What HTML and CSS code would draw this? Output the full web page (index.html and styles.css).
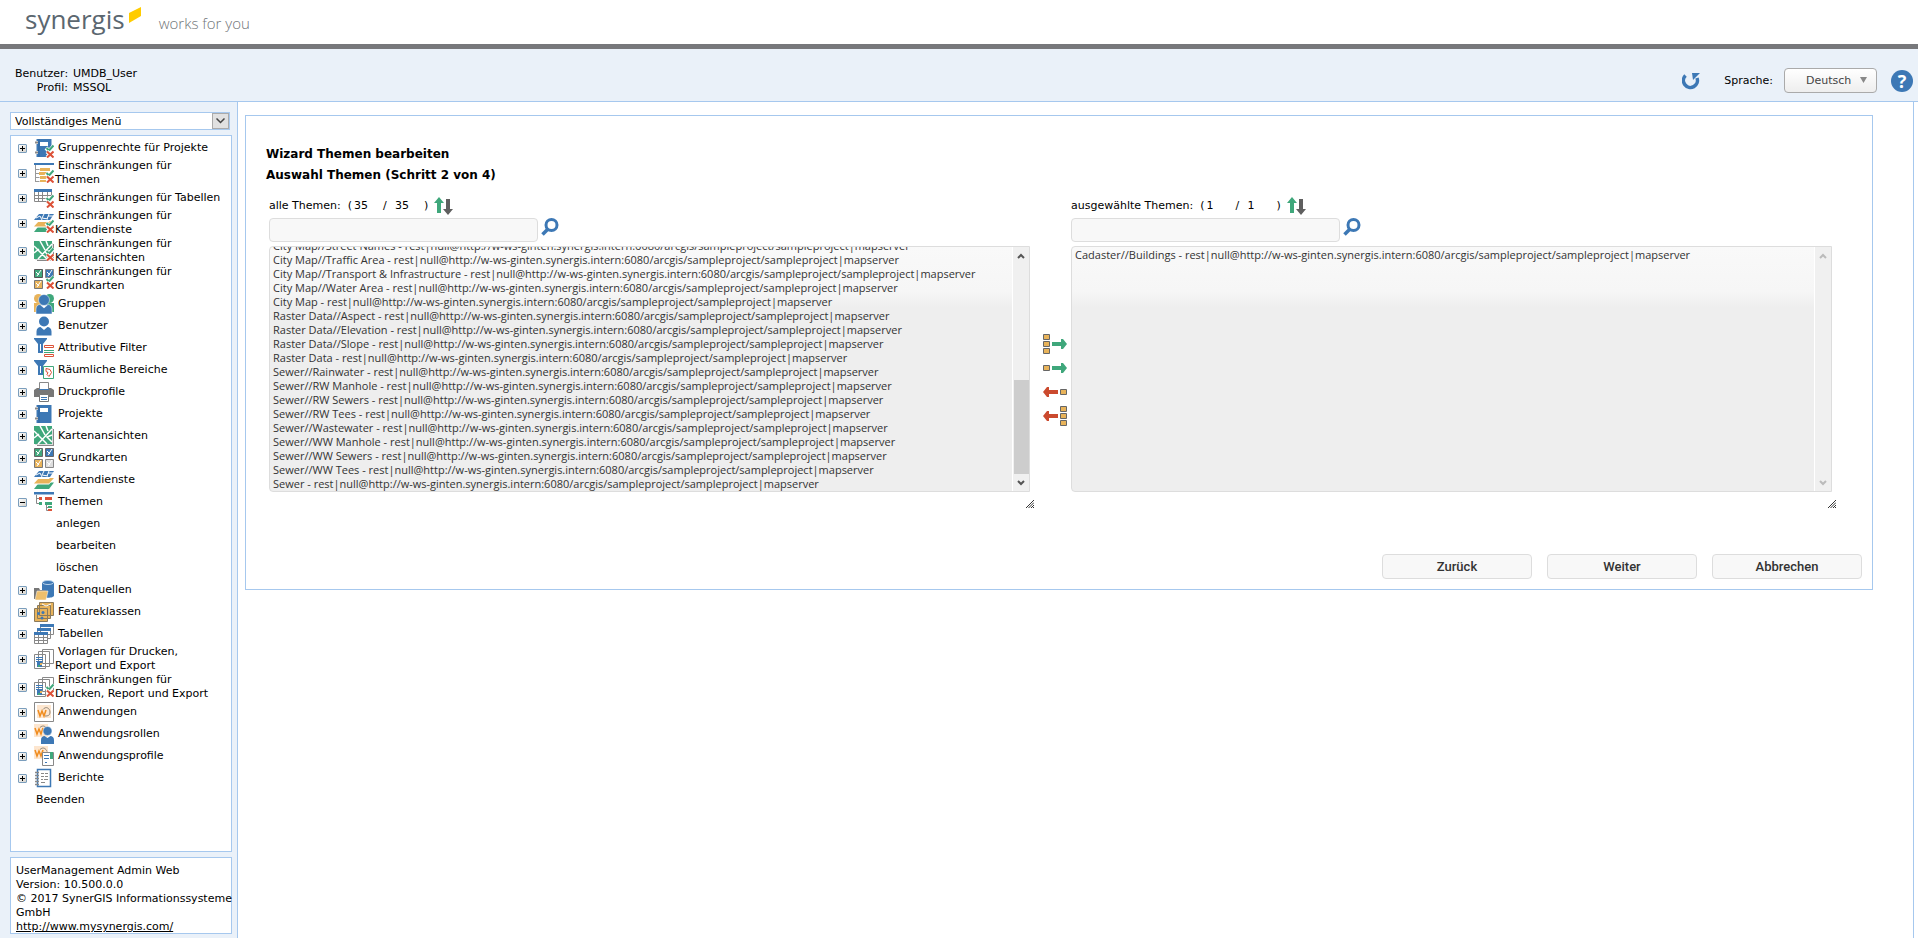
FILE: index.html
```html
<!DOCTYPE html>
<html lang="de">
<head>
<meta charset="utf-8">
<meta name="viewport" content="width=device-width, initial-scale=1">
<title>UserManagement Admin Web</title>
<link rel="stylesheet" href="styles.css">
</head>
<body>

<!-- icon sprite -->
<svg class="sprite" aria-hidden="true">
  <symbol id="ok-no" viewBox="0 0 20 20">
    <path d="M12 10l3 3 5-5.500" fill="none" stroke="#fff" stroke-width="4"/>
    <path d="M12.500 10l2.500 2.500 4.500-5" fill="none" stroke="#3fa77b" stroke-width="2"/>
    <path d="M13 13.500l6.500 6M19.500 13.500l-6.500 6" fill="none" stroke="#fff" stroke-width="4"/>
    <path d="M13 13.500l6.500 6M19.500 13.500l-6.500 6" fill="none" stroke="#dc5238" stroke-width="2"/>
  </symbol>
  <symbol id="project" viewBox="0 0 20 20">
    <path d="M2.500 1h15v18h-15z" fill="#3d78b5"/>
    <path d="M6 4h8v4H6z" fill="#fff"/>
    <path d="M5 1v18" stroke="#2f639b"/>
    <path d="M1 4.500h3M1 14.500h3" stroke="#fff" stroke-width="3"/>
    <path d="M1 4.500h3M1 14.500h3" stroke="#888" stroke-width="2"/>
  </symbol>
  <symbol id="theme-list" viewBox="0 0 20 20">
    <path d="M0 0h20v2H0z" fill="#3d78b5"/>
    <path d="M1.500 2v17M1.500 6.500h4M1.500 10.500h4M1.500 14.500h4M1.500 18.500h4" fill="none" stroke="#999"/>
    <path d="M6 5h10v3H6zM5 9h8v3H5zM6 13h7v3H6zM6 17h6v2H6z" fill="#e8b35a"/>
  </symbol>
  <symbol id="table" viewBox="0 0 20 20">
    <path d="M.500 3.500h17v10H.500zM.500 7.500h17M.500 10.500h17M4.500 4v10M8.500 4v10M13.500 4v10" fill="#fff" stroke="#888"/>
    <path d="M0 1h18v3H0z" fill="#3d78b5"/>
  </symbol>
  <symbol id="layers" viewBox="0 0 20 20">
    <path d="M5 12.500h15l-5 6.500H0z" fill="#3fa77b"/>
    <path d="M5 8.500h15l-5 6H0z" fill="#fff"/>
    <path d="M5 8h15l-5 5.500H0z" fill="#e8b35a"/>
    <path d="M5 3h15l-5 6H0z" fill="#fff"/>
    <path d="M5 1h15l-4 6H0z" fill="#3d78b5"/>
    <path d="M2 5l4-2 2 4M10 1l-2 4 6 1M15 1l-2 5M14 3h5" fill="none" stroke="#fff"/>
  </symbol>
  <symbol id="mapview" viewBox="0 0 20 20">
    <path d="M3 3h17v17H3z" fill="#888"/>
    <path d="M1 2h18v17H1z" fill="#ddd"/>
    <path d="M0 0h18v18H0z" fill="#3fa77b"/>
    <path d="M0 5l13 13M18 3L4 18M6 0l5 9M0 12l5-4M18 9l-5 2 5 5M12 0l2 5" fill="none" stroke="#fff" stroke-width="1.500"/>
  </symbol>
  <symbol id="basemaps" viewBox="0 0 20 20">
    <path d="M.500 .500h8v8h-8z" fill="#3fa77b" stroke="#666"/>
    <path d="M11.500 .500h8v8h-8z" fill="#3d78b5" stroke="#666"/>
    <path d="M.500 11.500h8v8h-8z" fill="#e8b35a" stroke="#777"/>
    <path d="M11.500 11.500h8v8h-8z" fill="#ddd" stroke="#888"/>
    <path d="M2 3l3 3M7 1L3 7M13 3l3 3M18 1l-4 6M2 14l3 3M7 12l-4 6M13 14l3 3M18 12l-4 6" stroke="#fff"/>
  </symbol>
  <symbol id="basemaps3" viewBox="0 0 20 20">
    <path d="M.500 .500h8v8h-8z" fill="#3fa77b" stroke="#555"/>
    <path d="M11.500 .500h8v8h-8z" fill="#3d78b5" stroke="#888"/>
    <path d="M.500 11.500h8v8h-8z" fill="#e8b35a" stroke="#777"/>
    <path d="M2 3l3 3M7 1L3 7M13 3l3 3M18 1l-4 6M2 14l3 3M7 12l-4 6" stroke="#fff"/>
  </symbol>
  <symbol id="user" viewBox="0 0 20 20">
    <circle cx="10" cy="5.500" r="5" fill="#3d78b5"/>
    <path d="M2.500 19.500v-4c0-3 2-4.500 4-4.500l3.500 3 3.500-3c2 0 4 1.500 4 4.500v4z" fill="#3d78b5"/>
  </symbol>
  <symbol id="group" viewBox="0 0 20 20">
    <circle cx="4.500" cy="4.500" r="4.500" fill="#e8b35a"/>
    <path d="M0 9h7v9H0z" fill="#e8b35a"/>
    <circle cx="15.500" cy="4.500" r="4.500" fill="#3fa77b"/>
    <path d="M13 9h7v9h-7z" fill="#3fa77b"/>
    <circle cx="10" cy="6" r="5.500" fill="#3d78b5" stroke="#fff" stroke-width=".5"/>
    <path d="M2 20v-5c0-3 2-4.500 4-4.500l4 3.500 4-3.500c2 0 4 1.500 4 4.500v5z" fill="#3d78b5" stroke="#fff" stroke-width=".5"/>
  </symbol>
  <symbol id="funnel" viewBox="0 0 20 20">
    <path d="M0 0h13v1L9 6v9H4V6L0 1z" fill="#3d78b5"/>
    <path d="M6.500 6v7" stroke="#fff"/>
  </symbol>
  <symbol id="filter-attr" viewBox="0 0 20 20">
    <use href="#funnel"/>
    <path d="M10 7h10v13H10z" fill="#fff"/>
    <path d="M10.500 7.500h9v2h-9zM10.500 16.500h9v2h-9z" fill="#fff" stroke="#dc5238"/>
    <path d="M10 12.500h10M10 14.500h10" stroke="#3fa77b"/>
  </symbol>
  <symbol id="filter-area" viewBox="0 0 20 20">
    <use href="#funnel"/>
    <path d="M9.500 6.500h10v12h-10z" fill="#fff" stroke="#3fa77b"/>
    <path d="M12 8.500l4 1 1.500 3-2.500 4-2-2 1-2-2-1z" fill="none" stroke="#dc5238"/>
  </symbol>
  <symbol id="printer" viewBox="0 0 20 20">
    <path d="M0 8l3-2h14l3 2v7H0z" fill="#777"/>
    <path d="M5.500 .500h9v7h-9z" fill="#fff" stroke="#888"/>
    <path d="M5 7.500h10" stroke="#3d78b5"/>
    <path d="M5.500 12.500h9v7h-9z" fill="#fff" stroke="#777"/>
    <path d="M7 15.500h6M7 17.500h6" stroke="#3d78b5"/>
  </symbol>
  <symbol id="themes" viewBox="0 0 20 20">
    <path d="M0 0h20v2.500H0z" fill="#3d78b5"/>
    <path d="M2.500 3v8.500H6M2.500 6.500H6M12.500 13v5.500H16M12.500 15.500H16" fill="none" stroke="#888"/>
    <path d="M5 5h3v3H5zM11 5h7v3h-7zM14 17h4v2h-4z" fill="#dc5238"/>
    <path d="M5 10h3v3H5zM11 10h7v3h-7zM14 14h4v2h-4z" fill="#3fa77b"/>
  </symbol>
  <symbol id="datasource" viewBox="0 0 20 20">
    <path d="M8 2.500v13c0 3 12 3 12 0v-13z" fill="#3d78b5"/>
    <ellipse cx="14" cy="2.500" rx="5.500" ry="2" fill="#3d78b5" stroke="#b9d2ea"/>
    <path d="M0 19V8h5l1 2h6v9z" fill="#777"/>
    <path d="M3 11h11l-2 9H1z" fill="#eebf6c" stroke="#fff" stroke-width=".5"/>
  </symbol>
  <symbol id="features" viewBox="0 0 20 20">
    <path d="M5.500 .500h14v13h-14zM3.500 3.500h13v13h-13zM.500 6.500h13v13H.500z" fill="#e8b35a" stroke="#8a7a5c"/>
    <path d="M8 2l4 2 5-2" fill="none" stroke="#fff"/>
    <circle cx="4.500" cy="11.500" r="1.500" fill="#3d78b5"/><circle cx="9" cy="10.500" r="1.500" fill="#3d78b5"/><circle cx="8" cy="16" r="1.500" fill="#3d78b5"/>
  </symbol>
  <symbol id="tables" viewBox="0 0 20 20">
    <path d="M6.500 1.500h13v9h-13zM3.500 5.500h13v9h-13z" fill="#fff" stroke="#888"/>
    <path d="M6 0h14v3H6zM3 4h14v3H3z" fill="#3d78b5"/>
    <path d="M.500 9.500h13v10H.500zM.500 13.500h13M.500 16.500h13M4.500 10v10M9.500 10v10" fill="#fff" stroke="#888"/>
    <path d="M0 8h14v3H0z" fill="#3d78b5"/>
  </symbol>
  <symbol id="reports" viewBox="0 0 20 20">
    <path d="M8.500 .500h11v14h-11zM4.500 2.500h11v15h-11zM.500 5.500h11v14H.500z" fill="#fff" stroke="#888"/>
    <path d="M2 8.500h7M2 10.500h7M2 12.500h7" stroke="#3d78b5"/>
    <path d="M3 13h5v5H3z" fill="#3d78b5"/>
    <path d="M4 16h2v2H4z" fill="#3fa77b"/><path d="M6 14h2v2H6z" fill="#e8b35a"/>
  </symbol>
  <symbol id="wo" viewBox="0 0 20 20">
    <path d="M3 3h14v13H3z" fill="#fde6cf"/>
    <path d="M4 8l2 6 2-5 2 5 2-6" fill="none" stroke="#f08c1e" stroke-width="1.500"/>
    <path d="M9 7.500c3-4 7-1 7 2.500s-2 4-5 4" fill="none" stroke="#8f8577"/>
  </symbol>
  <symbol id="app" viewBox="0 0 20 20">
    <path d="M.500 .500h19v19H.500z" fill="#fff" stroke="#888"/>
    <use href="#wo"/>
  </symbol>
  <symbol id="wo-top" viewBox="0 0 20 20">
    <path d="M0 0h14v13H0z" fill="#fde6cf"/>
    <path d="M1 4l2 6 2-5 2 5 2-6" fill="none" stroke="#f08c1e" stroke-width="1.500"/>
    <path d="M6 3.500c3-3 6-1 7 2" fill="none" stroke="#8f8577"/>
  </symbol>
  <symbol id="approle" viewBox="0 0 20 20">
    <use href="#wo-top"/>
    <circle cx="13.500" cy="7" r="4.500" fill="#3d78b5" stroke="#fff" stroke-width=".5"/>
    <path d="M7 20v-4c0-3 2-4 3.500-4l3 2 3-2c1.500 0 3.500 1 3.500 4v4z" fill="#3d78b5"/>
  </symbol>
  <symbol id="appprofile" viewBox="0 0 20 20">
    <use href="#wo-top"/>
    <path d="M8.500 6.500h11v13h-11z" fill="#fff" stroke="#888"/>
    <path d="M16 6h3v7h-3z" fill="#3fa77b"/>
    <path d="M10 9.500h5M10 12.500h5" stroke="#3d78b5"/><path d="M11 16.500h2" stroke="#3d78b5"/>
  </symbol>
  <symbol id="notes" viewBox="0 0 20 20">
    <path d="M3.500 1.500h13v17h-13z" fill="#fff" stroke="#3d78b5" stroke-width="1.500"/>
    <path d="M1 4.500h4M1 7.500h4M1 10.500h4M1 13.500h4M1 16.500h4" stroke="#888" stroke-width="1.500"/>
    <path d="M7 5.500h3M11 5.500h3M7 8.500h3M11 8.500h3M7 11.500h2M10 11.500h4M7 14.500h4" stroke="#888"/>
  </symbol>
  <symbol id="sort" viewBox="0 0 20 18">
    <path d="M5 0l5 6H7v10H3V6H0z" fill="#3fa77b"/>
    <path d="M14 18l-5-6h3V2h4v10h3z" fill="#5f5f5f"/>
  </symbol>
  <symbol id="search" viewBox="0 0 18 18">
    <circle cx="10.500" cy="7" r="5.500" fill="none" stroke="#3d78b5" stroke-width="3"/>
    <path d="M7 11l-5.500 5.500" stroke="#3d78b5" stroke-width="3.500"/>
  </symbol>
  <symbol id="grip" viewBox="0 0 8 8">
    <path d="M0 8l8-8M2.500 8L8 2.500M5 8l3-3M7 8l1-1" stroke="#333"/>
  </symbol>
  <symbol id="chev-up" viewBox="0 0 8 6"><path d="M1 5l3-3 3 3" fill="none" stroke="currentColor" stroke-width="2"/></symbol>
  <symbol id="chev-down" viewBox="0 0 8 6"><path d="M1 1l3 3 3-3" fill="none" stroke="currentColor" stroke-width="2"/></symbol>
  <symbol id="to-right" viewBox="0 0 15 10"><path d="M0 3h9V0h2l4 5-4 5H9V7H0z" fill="#3fa77b"/></symbol>
  <symbol id="to-left" viewBox="0 0 15 10"><path d="M15 3H6V0H4L0 5l4 5h2V7h9z" fill="#cb4a2e"/></symbol>
  <symbol id="box1" viewBox="0 0 7 6"><path d="M.500 .500h6v5h-6z" fill="#e8b35a" stroke="#666"/></symbol>
  <symbol id="box3" viewBox="0 0 7 20">
    <path d="M.500 .500h6v5h-6zM.500 7.500h6v5h-6zM.500 14.500h6v5h-6z" fill="#e8b35a" stroke="#666"/>
  </symbol>
</svg>

<header class="brand">
  <span class="brand-name">synergis</span>
  <svg class="brand-mark" viewBox="0 0 12 16"><path d="M0 6L12 0v9L0 16z" fill="#fc0"/></svg>
  <span class="brand-claim">works for you</span>
</header>

<div class="topbar">
  <dl class="userinfo">
    <dt>Benutzer:</dt><dd>UMDB_User</dd>
    <dt>Profil:</dt><dd>MSSQL</dd>
  </dl>
  <div class="tools">
    <button type="button" class="icon-btn refresh" aria-label="Aktualisieren">
      <svg width="18" height="18" viewBox="0 0 18 18">
        <path d="M3.500 3.500A7 7 0 1 0 15 6" fill="none" stroke="#3d78b5" stroke-width="3.500"/>
        <path d="M10 1h8l-7 7z" fill="#3d78b5"/>
      </svg>
    </button>
    <label for="lang">Sprache:</label>
    <span class="lang-box">
      <select id="lang" class="lang"><option>Deutsch</option></select>
      <svg class="lang-arrow" viewBox="0 0 7 6"><path d="M0 0h7L3.500 6z" fill="#888"/></svg>
    </span>
    <button type="button" class="help" aria-label="Hilfe">?</button>
  </div>
</div>

<div class="page">
  <aside class="sidebar">
    <span class="menu-box">
      <select class="menu-select" aria-label="Menü"><option>Vollständiges Menü</option></select>
      <span class="menu-arrow"><svg width="9" height="6" viewBox="0 0 9 6"><path d="M.500 .500l4 4 4-4" fill="none" stroke="#444" stroke-width="1.500"/></svg></span>
    </span>

    <nav class="tree">
      <ul>
        <li><i class="toggle"></i><svg class="ico"><use href="#project"/><use href="#ok-no"/></svg><a href="#">Gruppenrechte für Projekte</a></li>
        <li class="two"><i class="toggle"></i><svg class="ico"><use href="#theme-list"/><use href="#ok-no"/></svg><a href="#">Einschränkungen für<br>Themen</a></li>
        <li><i class="toggle"></i><svg class="ico"><use href="#table"/><use href="#ok-no"/></svg><a href="#">Einschränkungen für Tabellen</a></li>
        <li class="two"><i class="toggle"></i><svg class="ico"><use href="#layers"/><use href="#ok-no"/></svg><a href="#">Einschränkungen für<br>Kartendienste</a></li>
        <li class="two"><i class="toggle"></i><svg class="ico"><use href="#mapview"/><use href="#ok-no"/></svg><a href="#">Einschränkungen für<br>Kartenansichten</a></li>
        <li class="two"><i class="toggle"></i><svg class="ico"><use href="#basemaps3"/><use href="#ok-no"/></svg><a href="#">Einschränkungen für<br>Grundkarten</a></li>
        <li><i class="toggle"></i><svg class="ico"><use href="#group"/></svg><a href="#">Gruppen</a></li>
        <li><i class="toggle"></i><svg class="ico"><use href="#user"/></svg><a href="#">Benutzer</a></li>
        <li><i class="toggle"></i><svg class="ico"><use href="#filter-attr"/></svg><a href="#">Attributive Filter</a></li>
        <li><i class="toggle"></i><svg class="ico"><use href="#filter-area"/></svg><a href="#">Räumliche Bereiche</a></li>
        <li><i class="toggle"></i><svg class="ico"><use href="#printer"/></svg><a href="#">Druckprofile</a></li>
        <li><i class="toggle"></i><svg class="ico"><use href="#project"/></svg><a href="#">Projekte</a></li>
        <li><i class="toggle"></i><svg class="ico"><use href="#mapview"/></svg><a href="#">Kartenansichten</a></li>
        <li><i class="toggle"></i><svg class="ico"><use href="#basemaps"/></svg><a href="#">Grundkarten</a></li>
        <li><i class="toggle"></i><svg class="ico"><use href="#layers"/></svg><a href="#">Kartendienste</a></li>
        <li><i class="toggle open"></i><svg class="ico"><use href="#themes"/></svg><a href="#">Themen</a></li>
        <li class="sub"><a href="#">anlegen</a></li>
        <li class="sub"><a href="#">bearbeiten</a></li>
        <li class="sub"><a href="#">löschen</a></li>
        <li><i class="toggle"></i><svg class="ico"><use href="#datasource"/></svg><a href="#">Datenquellen</a></li>
        <li><i class="toggle"></i><svg class="ico"><use href="#features"/></svg><a href="#">Featureklassen</a></li>
        <li><i class="toggle"></i><svg class="ico"><use href="#tables"/></svg><a href="#">Tabellen</a></li>
        <li class="two"><i class="toggle"></i><svg class="ico"><use href="#reports"/></svg><a href="#">Vorlagen für Drucken,<br>Report und Export</a></li>
        <li class="two"><i class="toggle"></i><svg class="ico"><use href="#reports"/><use href="#ok-no"/></svg><a href="#">Einschränkungen für<br>Drucken, Report und Export</a></li>
        <li><i class="toggle"></i><svg class="ico"><use href="#app"/></svg><a href="#">Anwendungen</a></li>
        <li><i class="toggle"></i><svg class="ico"><use href="#approle"/></svg><a href="#">Anwendungsrollen</a></li>
        <li><i class="toggle"></i><svg class="ico"><use href="#appprofile"/></svg><a href="#">Anwendungsprofile</a></li>
        <li><i class="toggle"></i><svg class="ico"><use href="#notes"/></svg><a href="#">Berichte</a></li>
        <li class="end"><a href="#">Beenden</a></li>
      </ul>
    </nav>

    <div class="about">
      UserManagement Admin Web<br>
      Version: 10.500.0.0<br>
      © 2017 SynerGIS Informationssysteme<br>
      GmbH<br>
      <a href="http://www.mysynergis.com/">http://www.mysynergis.com/</a>
    </div>
  </aside>

  <main class="content">
    <form class="wizard">
      <h1>Wizard Themen bearbeiten</h1>
      <h2>Auswahl Themen (Schritt 2 von 4)</h2>

      <div class="lists">
        <section class="list">
          <div class="list-head">
            <label for="all">alle Themen:</label>
            <span class="paren">(</span><span class="count">35</span><span class="slash">/</span><span class="count">35</span>)
            <button type="button" class="icon-btn sort" aria-label="Sortieren"><svg width="20" height="18"><use href="#sort"/></svg></button>
          </div>
          <div class="search">
            <input type="text" aria-label="Themen suchen">
            <button type="button" class="icon-btn" aria-label="Suchen"><svg width="18" height="18"><use href="#search"/></svg></button>
          </div>
          <div class="listbox">
            <select id="all" multiple>
              <option>City Map//Street Names - rest|null@http://w-ws-ginten.synergis.intern:6080/arcgis/sampleproject/sampleproject|mapserver</option>
              <option>City Map//Traffic Area - rest|null@http://w-ws-ginten.synergis.intern:6080/arcgis/sampleproject/sampleproject|mapserver</option>
              <option>City Map//Transport &amp; Infrastructure - rest|null@http://w-ws-ginten.synergis.intern:6080/arcgis/sampleproject/sampleproject|mapserver</option>
              <option>City Map//Water Area - rest|null@http://w-ws-ginten.synergis.intern:6080/arcgis/sampleproject/sampleproject|mapserver</option>
              <option>City Map - rest|null@http://w-ws-ginten.synergis.intern:6080/arcgis/sampleproject/sampleproject|mapserver</option>
              <option>Raster Data//Aspect - rest|null@http://w-ws-ginten.synergis.intern:6080/arcgis/sampleproject/sampleproject|mapserver</option>
              <option>Raster Data//Elevation - rest|null@http://w-ws-ginten.synergis.intern:6080/arcgis/sampleproject/sampleproject|mapserver</option>
              <option>Raster Data//Slope - rest|null@http://w-ws-ginten.synergis.intern:6080/arcgis/sampleproject/sampleproject|mapserver</option>
              <option>Raster Data - rest|null@http://w-ws-ginten.synergis.intern:6080/arcgis/sampleproject/sampleproject|mapserver</option>
              <option>Sewer//Rainwater - rest|null@http://w-ws-ginten.synergis.intern:6080/arcgis/sampleproject/sampleproject|mapserver</option>
              <option>Sewer//RW Manhole - rest|null@http://w-ws-ginten.synergis.intern:6080/arcgis/sampleproject/sampleproject|mapserver</option>
              <option>Sewer//RW Sewers - rest|null@http://w-ws-ginten.synergis.intern:6080/arcgis/sampleproject/sampleproject|mapserver</option>
              <option>Sewer//RW Tees - rest|null@http://w-ws-ginten.synergis.intern:6080/arcgis/sampleproject/sampleproject|mapserver</option>
              <option>Sewer//Wastewater - rest|null@http://w-ws-ginten.synergis.intern:6080/arcgis/sampleproject/sampleproject|mapserver</option>
              <option>Sewer//WW Manhole - rest|null@http://w-ws-ginten.synergis.intern:6080/arcgis/sampleproject/sampleproject|mapserver</option>
              <option>Sewer//WW Sewers - rest|null@http://w-ws-ginten.synergis.intern:6080/arcgis/sampleproject/sampleproject|mapserver</option>
              <option>Sewer//WW Tees - rest|null@http://w-ws-ginten.synergis.intern:6080/arcgis/sampleproject/sampleproject|mapserver</option>
              <option>Sewer - rest|null@http://w-ws-ginten.synergis.intern:6080/arcgis/sampleproject/sampleproject|mapserver</option>
            </select>
            <div class="scrollbar">
              <svg width="8" height="6"><use href="#chev-up"/></svg>
              <span class="thumb"></span>
              <svg width="8" height="6"><use href="#chev-down"/></svg>
            </div>
          </div>
          <svg class="grip"><use href="#grip"/></svg>
        </section>

        <div class="transfer">
          <button type="button" class="icon-btn" aria-label="Alle hinzufügen"><svg width="7" height="20"><use href="#box3"/></svg><svg width="15" height="10"><use href="#to-right"/></svg></button>
          <button type="button" class="icon-btn" aria-label="Hinzufügen"><svg width="7" height="6"><use href="#box1"/></svg><svg width="15" height="10"><use href="#to-right"/></svg></button>
          <button type="button" class="icon-btn" aria-label="Entfernen"><svg width="15" height="10"><use href="#to-left"/></svg><svg width="7" height="6"><use href="#box1"/></svg></button>
          <button type="button" class="icon-btn" aria-label="Alle entfernen"><svg width="15" height="10"><use href="#to-left"/></svg><svg width="7" height="20"><use href="#box3"/></svg></button>
        </div>

        <section class="list">
          <div class="list-head">
            <label for="chosen">ausgewählte Themen:</label>
            <span class="paren">(</span><span class="count">1</span><span class="slash">/</span><span class="count">1</span>)
            <button type="button" class="icon-btn sort" aria-label="Sortieren"><svg width="20" height="18"><use href="#sort"/></svg></button>
          </div>
          <div class="search">
            <input type="text" aria-label="Ausgewählte suchen">
            <button type="button" class="icon-btn" aria-label="Suchen"><svg width="18" height="18"><use href="#search"/></svg></button>
          </div>
          <div class="listbox">
            <select id="chosen" multiple>
              <option>Cadaster//Buildings - rest|null@http://w-ws-ginten.synergis.intern:6080/arcgis/sampleproject/sampleproject|mapserver</option>
            </select>
            <div class="scrollbar off">
              <svg width="8" height="6"><use href="#chev-up"/></svg>
              <svg width="8" height="6"><use href="#chev-down"/></svg>
            </div>
          </div>
          <svg class="grip"><use href="#grip"/></svg>
        </section>
      </div>

      <div class="actions">
        <button type="button">Zurück</button>
        <button type="button">Weiter</button>
        <button type="button">Abbrechen</button>
      </div>
    </form>
  </main>
</div>

<script>
  // start at the end of the list
  var all = document.getElementById('all');
  all.scrollTop = all.scrollHeight;
</script>
</body>
</html>
```
FILE: styles.css
```css
* {
    box-sizing: border-box;
}
body {
    margin: 0;
    min-height: 100vh;
    display: flex;
    flex-direction: column;
    font: 11px/14px Verdana, "DejaVu Sans", sans-serif;
    color: #000;
    background: #fff;
}
a {
    color: inherit;
    text-decoration: none;
}
select, input, button {
    font: inherit;
    color: inherit;
    margin: 0;
}
.sprite {
    position: absolute;
    width: 0;
    height: 0;
}
.icon-btn {
    display: flex;
    align-items: center;
    padding: 0;
    border: 0;
    background: none;
    cursor: pointer;
}

/* header */
.brand {
    display: flex;
    height: 49px;
    padding: 0 25px;
    border-bottom: 5px solid #77787b;
    font-family: "Open Sans", sans-serif;
}
.brand-name {
    font-size: 26px;
    line-height: 38px;
    color: #5b6770;
}
.brand-mark {
    width: 12px;
    height: 16px;
    margin: 7px 18px 0 4px;
}
.brand-claim {
    font-size: 15px;
    font-weight: 300;
    line-height: 46px;
    color: #6f7478;
}
.topbar {
    display: flex;
    justify-content: space-between;
    height: 53px;
    background: #eaf1f9;
    border-bottom: 1px solid #a6c8ee;
}
.userinfo {
    display: grid;
    grid-template-columns: 53px auto;
    column-gap: 5px;
    align-content: start;
    margin: 18px 0 0 15px;
}
.userinfo dt {
    text-align: right;
}
.userinfo dd {
    margin: 0;
}
.tools {
    display: flex;
    align-items: center;
    padding: 11px 5px 0 0;
}
.refresh {
    margin-right: 24px;
}
.lang-box {
    position: relative;
    margin: 0 14px 0 11px;
}
.lang {
    appearance: none;
    width: 93px;
    height: 25px;
    padding: 1px 21px 0;
    border: 1px solid #aaa;
    border-radius: 4px;
    background: linear-gradient(#fff, #eee);
    color: #444;
}
.lang-arrow {
    position: absolute;
    right: 10px;
    top: 9px;
    width: 7px;
    height: 6px;
    pointer-events: none;
}
.help {
    width: 22px;
    height: 22px;
    padding: 0;
    border: 0;
    border-radius: 50%;
    background: #3d78b5;
    color: #fff;
    font: bold 18px/22px "Open Sans", sans-serif;
}

/* left menu */
.page {
    flex: 1;
    display: flex;
    padding-right: 4px;
}
.sidebar {
    display: flex;
    flex-direction: column;
    width: 238px;
    padding: 10px 5px 4px 10px;
    background: #eaf1f9;
    border-right: 1px solid #a6c8ee;
}
.menu-box {
    position: relative;
    width: 220px;
    height: 18px;
    margin-bottom: 5px;
}
.menu-select {
    appearance: none;
    display: block;
    width: 100%;
    height: 18px;
    padding: 1px 4px 0;
    border: 1px solid #a6c8ee;
    border-radius: 0;
    background: #fff;
}
.menu-arrow {
    position: absolute;
    top: 1px;
    right: 1px;
    width: 17px;
    height: 16px;
    display: flex;
    align-items: center;
    justify-content: center;
    border: 1px solid #aaa;
    background: #e1e1e1;
    pointer-events: none;
}
.tree {
    flex: 1;
    padding-top: 1px;
    border: 1px solid #a6c8ee;
    background: #fff;
}
.tree ul {
    margin: 0;
    padding: 0;
    list-style: none;
}
.tree li {
    display: flex;
    align-items: center;
    height: 22px;
    padding-left: 7px;
}
.tree li.two {
    height: 28px;
}
.tree li.sub {
    padding-left: 44px;
}
.tree li.end {
    padding-left: 24px;
}
.tree a {
    white-space: nowrap;
    padding-left: 1px;
}
.ico + a {
    text-indent: 3px;
}
.ico {
    width: 20px;
    height: 20px;
    flex: none;
}
.toggle {
    width: 9px;
    height: 9px;
    margin-right: 7px;
    border: 1px solid #7b9ebd;
    border-radius: 1px;
    background:
        linear-gradient(#000, #000) center / 5px 1px no-repeat,
        linear-gradient(#000, #000) center / 1px 5px no-repeat,
        linear-gradient(135deg, #fff, #d5d2cb);
}
.toggle.open {
    background:
        linear-gradient(#000, #000) center / 5px 1px no-repeat,
        linear-gradient(135deg, #fff, #d5d2cb);
}
.about {
    margin-top: 5px;
    padding: 6px 0 0 5px;
    height: 77px;
    border: 1px solid #a6c8ee;
    background: #fff;
    white-space: nowrap;
}
.about a {
    text-decoration: underline;
}

/* wizard */
.content {
    flex: 1;
    min-width: 0;
    padding: 13px 40px 0 7px;
    border-right: 1px solid #a6c8ee;
}
.wizard {
    border: 1px solid #a6c8ee;
    padding: 28px 10px 10px 20px;
}
.wizard h1, .wizard h2 {
    margin: 0;
    font: bold 12px/21px Tahoma, "DejaVu Sans", sans-serif;
}
.lists {
    display: flex;
    padding: 10px 30px 0 3px;
}
.list {
    flex: 1;
    min-width: 0;
}
.list-head {
    display: flex;
    align-items: center;
    height: 20px;
}
.paren {
    margin-left: 7px;
}
.count {
    width: 31px;
    padding-left: 2px;
}
.slash {
    width: 10px;
}
.sort {
    margin-left: 6px;
}
.search {
    display: flex;
    align-items: flex-start;
    gap: 3px;
    margin: 2px 0 4px;
}
.search input {
    width: 269px;
    height: 24px;
    padding: 0 4px;
    border: 1px solid #ddd;
    border-radius: 4px;
    background: #f8f8f8;
}
.listbox {
    display: flex;
    height: 246px;
    border: 1px solid #ddd;
    border-radius: 4px 0 0 4px;
    background: linear-gradient(#f9f9f9, #f6f6f6 44px, #eee 60px);
}
.listbox select {
    flex: 1;
    min-width: 0;
    padding: 0;
    border: 0;
    outline: 0;
    background: none;
    color: #333;
    font: 11px/14px "Open Sans", sans-serif;
    overflow: hidden;
    scrollbar-width: none;
}
.listbox option {
    height: 14px;
    min-height: 14px;
    padding: 0 3px;
    line-height: 14px;
}
.scrollbar {
    display: flex;
    flex-direction: column;
    align-items: center;
    justify-content: space-between;
    width: 17px;
    padding: 6px 0 5px;
    border-left: 1px solid #fff;
    background: #f0f0f0;
    color: #555;
}
.scrollbar.off {
    color: #bbb;
}
.thumb {
    width: 15px;
    height: 94px;
    margin-top: auto;
    margin-bottom: 6px;
    background: #cdcdcd;
}
.grip {
    display: block;
    width: 8px;
    height: 8px;
    margin: 8px -4px 0 auto;
}
.transfer {
    display: flex;
    flex-direction: column;
    gap: 4px;
    width: 41px;
    padding: 138px 4px 0 13px;
}
.transfer .icon-btn {
    height: 20px;
    gap: 2px;
}
.actions {
    display: flex;
    justify-content: flex-end;
    gap: 15px;
    margin-top: 46px;
}
.actions button {
    width: 150px;
    height: 25px;
    border: 1px solid #ddd;
    border-radius: 4px;
    background: #f8f8f8;
    color: #333;
    font: 500 13px/14px Roboto, sans-serif;
}
```
